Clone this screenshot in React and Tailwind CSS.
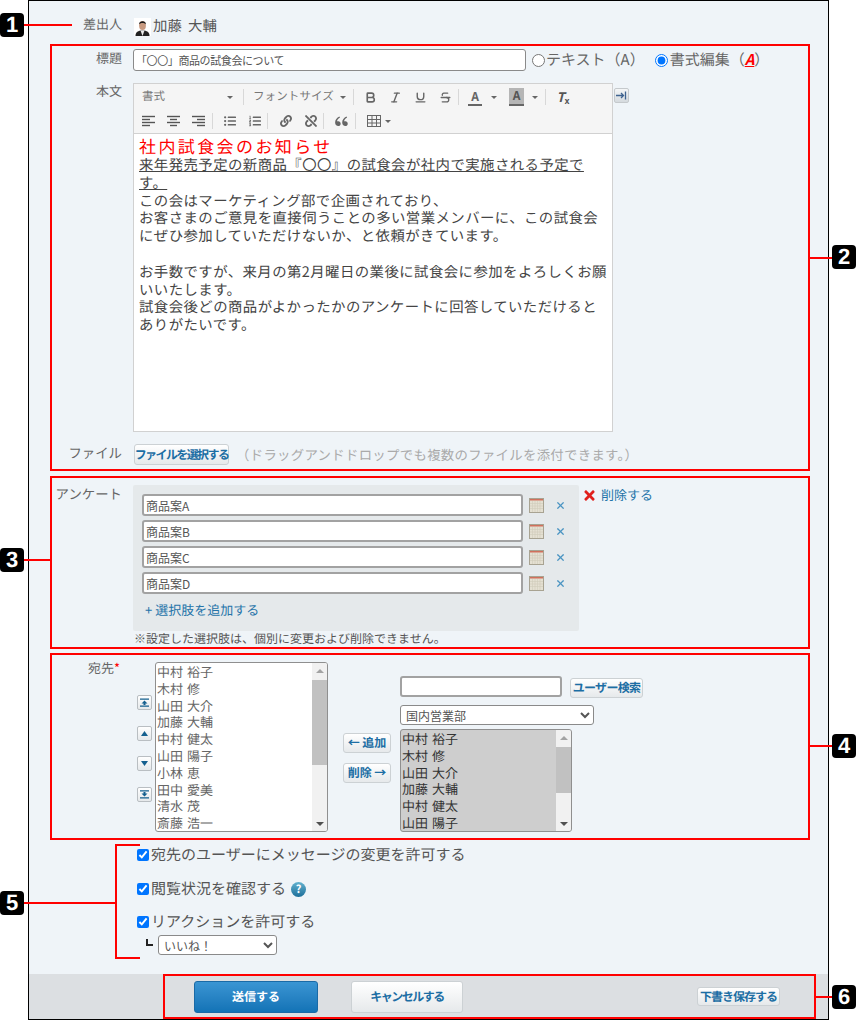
import { Bold, Italic, Underline, Strikethrough, X } from 'lucide-react'
import { FaLink, FaUnlink, FaTimes, FaListUl, FaListOl } from 'react-icons/fa'
import { RiDoubleQuotesL } from 'react-icons/ri'

const SENDERS = ['中村 裕子', '木村 修', '山田 大介', '加藤 大輔', '中村 健太', '山田 陽子', '小林 恵', '田中 愛美', '清水 茂', '斎藤 浩一']
const CHOICES = ['商品案A', '商品案B', '商品案C', '商品案D']
const btn = 'border border-[#ccd1d4] rounded-[3px] bg-gradient-to-b from-white to-[#e6e9eb] text-[#1c6ea4] font-bold text-[12px] flex items-center justify-center whitespace-nowrap'

function Sep() {
  return <span className="w-px h-[16px] bg-[#d8d8d8] shrink-0" />
}

function Caret({ className = '' }) {
  return <span className={`w-0 h-0 border-x-[3px] border-x-transparent border-t-[3px] border-t-[#666] shrink-0 ${className}`} />
}

function Tool({ children, className = 'w-[25px]' }) {
  return <span className={`h-[20px] flex items-center justify-center text-[#666] shrink-0 ${className}`}>{children}</span>
}

function AlignIcon({ kind }) {
  const lines = kind === 'left'
    ? [[1, 14], [1, 9], [1, 14], [1, 9]]
    : kind === 'center'
      ? [[1, 14], [4, 11], [1, 14], [4, 11]]
      : [[1, 14], [6, 14], [1, 14], [6, 14]]
  return (
    <svg width="15" height="12" viewBox="0 0 15 12">
      {lines.map(([a, b], i) => (
        <line key={i} x1={a} x2={b} y1={1.5 + i * 3} y2={1.5 + i * 3} stroke="#555" strokeWidth="1.4" />
      ))}
    </svg>
  )
}

function Toolbar() {
  return (
    <div className="h-[50px] pt-[3px] bg-[#f5f5f5] border-b border-[#d1d1d1] text-[#777]">
      <div className="h-[20px] flex items-center">
        <div className="w-[109px] flex items-center pl-[8px] text-[11.5px] shrink-0">
          <span>書式</span>
          <Caret className="ml-[62px]" />
        </div>
        <Sep />
        <div className="w-[109px] flex items-center pl-[9px] text-[11.5px] tracking-[0.1px] shrink-0">
          <span>フォントサイズ</span>
          <Caret className="ml-[6px]" />
        </div>
        <Sep />
        <span className="w-[4px]" />
        <Tool><Bold size={13} strokeWidth={3} /></Tool>
        <Tool><Italic size={13} strokeWidth={2.6} /></Tool>
        <Tool><Underline size={13} strokeWidth={2.6} /></Tool>
        <Tool><Strikethrough size={13} strokeWidth={2.4} /></Tool>
        <Sep />
        <Tool className="w-[32px]"><span className="border-b-2 border-[#666] text-[12px] font-bold leading-[15px] px-[3px]">A</span></Tool>
        <Caret />
        <span className="w-[9px]" />
        <span className="w-[15px] h-[18px] bg-[#b5b5b5] border-b-2 border-[#666] text-[#555] text-[12px] font-bold leading-[15px] text-center ml-[3px]">A</span>
        <Caret className="ml-[8px]" />
        <span className="w-[7px]" />
        <Sep />
        <Tool className="w-[34px]">
          <span className="italic font-bold text-[13px] leading-[16px] text-[#555]">T<sub className="text-[9px] not-italic">x</sub></span>
        </Tool>
      </div>
      <div className="h-[20px] mt-[4px] flex items-center pl-[2px]">
        <Tool><AlignIcon kind="left" /></Tool>
        <Tool><AlignIcon kind="center" /></Tool>
        <Tool><AlignIcon kind="right" /></Tool>
        <span className="w-px" />
        <Sep />
        <span className="w-[4px]" />
        <Tool><FaListUl size={12} /></Tool>
        <Tool><FaListOl size={12} /></Tool>
        <Sep />
        <span className="w-[5px]" />
        <Tool><FaLink size={12} /></Tool>
        <Tool><FaUnlink size={12} /></Tool>
        <Sep />
        <span className="w-[5px]" />
        <Tool><RiDoubleQuotesL size={17} /></Tool>
        <span className="w-[1px]" />
        <Sep />
        <span className="w-[5px]" />
        <Tool>
          <svg width="14" height="12" viewBox="0 0 14 12" fill="none" stroke="#666" strokeWidth="1">
            <rect x="0.5" y="0.5" width="13" height="11" />
            <path d="M0 4.5h14M0 8h14M5 0v12M9.5 0v12" />
          </svg>
        </Tool>
        <Caret className="ml-[-1px]" />
      </div>
    </div>
  )
}

function Field({ label, className = '', labelClass = 'text-[13px]', children }) {
  return (
    <div className={`flex ${className}`}>
      <div className={`w-[70px] shrink-0 text-right text-[#666] whitespace-nowrap ${labelClass}`}>{label}</div>
      <div className="ml-[11px] flex-1 min-w-0">{children}</div>
    </div>
  )
}

function CalendarIcon() {
  return (
    <svg width="15" height="15" viewBox="0 0 15 15" className="shrink-0">
      <rect x="0.5" y="0.5" width="14" height="14" fill="#e4e0d2" stroke="#a8a392" />
      <rect x="1" y="1" width="13" height="1.5" fill="#d0705c" />
      <path d="M1 5.5h13M1 8h13M1 10.5h13M3.5 3v11M6 3v11M8.5 3v11M11 3v11" stroke="#d0cbba" strokeWidth="0.6" />
    </svg>
  )
}

function ChoiceRow({ value }) {
  return (
    <div className="flex items-center h-[22px] mb-[4px]">
      <input
        readOnly
        value={value}
        className="w-[381px] h-[22px] bg-white border-2 border-[#a2a2a2] rounded-[3px] pl-[2px] text-[12px] text-[#555] outline-none"
      />
      <span className="w-[6px]" />
      <CalendarIcon />
      <X size={11} className="ml-[11px] text-[#4a94c2]" strokeWidth={2.6} />
    </div>
  )
}

function ListBox({ items, width, height, thumbTop, thumbHeight, selected }) {
  return (
    <div className={`flex border border-[#8f8f8f] rounded-[3px] overflow-hidden shrink-0 ${width} ${height} ${selected ? 'bg-[#cecece] text-[#333]' : 'bg-white text-[#666]'}`}>
      <div className="flex-1 pl-[1px] pt-[1px] text-[13px] leading-[16.8px] overflow-hidden whitespace-nowrap [word-spacing:1px]">
        {items.map((name) => <div key={name}>{name}</div>)}
      </div>
      <div className="w-[15px] bg-[#f1f1f1] flex flex-col items-center shrink-0">
        <span className="h-[15px] flex items-center justify-center shrink-0">
          <span className="w-0 h-0 border-x-[4px] border-x-transparent border-b-[4px] border-b-[#a3a3a3]" />
        </span>
        <span className={`shrink-0 ${thumbTop}`} />
        <span className={`w-full bg-[#c1c1c1] shrink-0 ${thumbHeight}`} />
        <span className="flex-1" />
        <span className="h-[15px] flex items-center justify-center shrink-0">
          <span className="w-0 h-0 border-x-[4px] border-x-transparent border-t-[4px] border-t-[#505050]" />
        </span>
      </div>
    </div>
  )
}

function MoveButton({ d, className = '' }) {
  return (
    <span className={`w-[15px] h-[15px] border border-[#b9bec2] rounded-[2px] bg-gradient-to-b from-white to-[#e6e9eb] flex items-center justify-center ${className}`}>
      <svg width="9" height="9" viewBox="0 0 9 9"><path d={d} fill="#15608f" /></svg>
    </span>
  )
}

function CheckRow({ label, children }) {
  return (
    <label className="h-[22px] flex items-center text-[15px] text-[#555] whitespace-nowrap">
      <input type="checkbox" defaultChecked className="w-[12px] h-[12px] m-0 mr-[2px] shrink-0" />
      <span>{label}</span>
      {children}
    </label>
  )
}

function Badge({ n, className }) {
  return (
    <div className={`absolute w-[24px] h-[24px] bg-black rounded-[4px] text-white font-bold text-[22px] leading-[24px] text-center font-['Liberation_Sans',sans-serif] ${className}`}>
      {n}
    </div>
  )
}

function Avatar() {
  return (
    <svg width="17" height="18" viewBox="0 0 17 18" className="shrink-0">
      <rect width="17" height="18" fill="#fff" />
      <path d="M1.5 18c0-4 2.5-5.5 7-5.5s7 1.500 7 5.500z" fill="#222" />
      <path d="M6.500 12.500h4l-2 5.500z" fill="#eee" />
      <ellipse cx="8.500" cy="7.500" rx="3.400" ry="4.500" fill="#c89a80" />
      <path d="M5 6.500C4.800 2.500 12 2 12 6.500c-1-2-6-2-7 0z" fill="#1c1c1c" />
    </svg>
  )
}

export default function App() {
  return (
    <div className="relative w-[856px] h-[1020px] overflow-hidden bg-white font-['Noto_Sans_CJK_JP',sans-serif] [text-rendering:geometricPrecision]">
      <div className="ml-[28px] w-[801px] h-[1020px] border border-black bg-[#eff4f8] flex flex-col">
        {/* 差出人 */}
        <div className="h-[43px] shrink-0 flex items-start pt-[17px] pl-[53px]">
          <span className="text-[13px] text-[#666] leading-[14px] -mt-[1px] w-[40px] text-right">差出人</span>
          <span className="ml-[12px]"><Avatar /></span>
          <span className="ml-[2px] text-[14.4px] leading-[14px] mt-[1px] text-[#555] [word-spacing:3px]">加藤 大輔</span>
        </div>

        {/* 標題 / 本文 / ファイル */}
        <section className="ml-[21px] w-[760px] h-[427px] border-2 border-[#ff0000] shrink-0">
          <Field label="標題" labelClass="text-[13px] pb-[4px]" className="mt-[3px] h-[22px] items-center">
            <div className="flex items-center">
              <input
                readOnly
                value="「〇〇」商品の試食会について"
                className="w-[393px] h-[22px] bg-white border border-[#8a8a8a] rounded-[3px] pl-[2px] text-[11px] tracking-[-0.4px] text-[#555] outline-none"
              />
              <label className="ml-[6px] flex items-center text-[15px] text-[#666] whitespace-nowrap">
                <input type="radio" name="mode" className="w-[13px] h-[13px] m-0 mr-[1px]" />
                <span>テキスト（A）</span>
              </label>
              <label className="ml-[10px] flex items-center text-[15px] text-[#666] whitespace-nowrap">
                <input type="radio" name="mode" defaultChecked className="w-[13px] h-[13px] m-0 mr-[2px]" />
                <span>書式編集（</span>
                <span className="text-[#ff0000] font-bold italic underline">A</span>
                <span>）</span>
              </label>
            </div>
          </Field>

          <Field label="本文" labelClass="text-[13px] -mt-[2px]" className="mt-[12px]">
            <div className="flex items-start">
              <div className="w-[480px] h-[349px] border border-[#d1d1d1] bg-white shrink-0">
                <Toolbar />
                <div className="pl-[5px] pt-[2px] text-[14.4px] tracking-[0.44px] leading-[17.8px] text-[#444] whitespace-nowrap">
                  <div className="text-[#ff0000] text-[17px] leading-[20px] tracking-[2.4px]">社内試食会のお知らせ</div>
                  <div className="underline">来年発売予定の新商品『〇〇』の試食会が社内で実施される予定で</div>
                  <div className="underline">す。</div>
                  <div>この会はマーケティング部で企画されており、</div>
                  <div>お客さまのご意見を直接伺うことの多い営業メンバーに、この試食会</div>
                  <div>にぜひ参加していただけないか、と依頼がきています。</div>
                  <div className="h-[17.8px]" />
                  <div>お手数ですが、来月の第2月曜日の業後に試食会に参加をよろしくお願</div>
                  <div>いいたします。</div>
                  <div>試食会後どの商品がよかったかのアンケートに回答していただけると</div>
                  <div>ありがたいです。</div>
                </div>
              </div>
              <span className="mt-[5px] w-[15px] h-[15px] ml-[1px] border border-[#c5c9cc] rounded-[2px] bg-gradient-to-b from-[#f4f6f7] to-[#d5dade] flex items-center justify-center">
                <svg width="11" height="9" viewBox="0 0 11 9" fill="none" stroke="#3f6390" strokeWidth="1.300">
                  <path d="M0 4.500h7M5 2l2.500 2.500L5 7M9.500 0.500v8" />
                </svg>
              </span>
            </div>
          </Field>

          <Field label="ファイル" labelClass="text-[13.4px] leading-[17px]" className="mt-[12px] items-start">
            <div className="flex items-center h-[21px]">
              <span className={`${btn} w-[95px] h-[21px] ml-[1px] text-[11px] tracking-[-1.600px]`}>ファイルを選択する</span>
              <span className="ml-[7px] text-[13.400px] tracking-[0.3px] text-[#aaa] whitespace-nowrap">（ドラッグアンドドロップでも複数のファイルを添付できます。）</span>
            </div>
          </Field>
        </section>

        {/* アンケート */}
        <section className="ml-[21px] mt-[5px] w-[760px] h-[173px] border-2 border-[#ff0000] shrink-0">
          <Field label="アンケート" labelClass="text-[13.4px] leading-[17px]" className="mt-[7px]">
            <div className="flex items-start">
              <div className="w-[446px] h-[146px] bg-[#e5e9eb] rounded-[2px] pt-[9px] pl-[9px] shrink-0">
                {CHOICES.map((c) => <ChoiceRow key={c} value={c} />)}
                <div className="mt-[7px] ml-[3px] text-[13px] leading-[18px] text-[#2574a9]">+ 選択肢を追加する</div>
              </div>
              <div className="ml-[3px] mt-[1px] flex items-center text-[13px] leading-[18px] text-[#2574a9] whitespace-nowrap">
                <FaTimes size={15} className="text-[#e0201c] mr-[4px]" />
                <span>削除する</span>
              </div>
            </div>
            <div className="mt-[1px] ml-[1px] text-[12px] leading-[14px] text-[#555] whitespace-nowrap">※設定した選択肢は、個別に変更および削除できません。</div>
          </Field>
        </section>

        {/* 宛先 */}
        <section className="ml-[21px] mt-[4px] w-[760px] h-[187px] border-2 border-[#ff0000] flex items-start shrink-0">
          <div className="w-[68px] mt-[4px] text-right text-[13px] leading-[18px] text-[#666] shrink-0">宛先<span className="text-[#ff0000]">*</span></div>
          <div className="ml-[17px] mt-[40px] w-[15px] flex flex-col gap-[15.500px] shrink-0">
            <MoveButton d="M0 0.500h9V1.800H0zM4.500 2.500L7.500 5.500H5.500V7H3.500V5.500H1.500zM0 7.500h9V8.800H0z" />
            <MoveButton d="M4.500 2L8 7H1z" />
            <MoveButton d="M4.500 7L1 2H8z" />
            <MoveButton d="M0 0.200h9V1.500H0zM4.500 6.500L1.500 3.500H3.500V2H5.500V3.500H7.500zM0 7.200h9V8.500H0z" />
          </div>
          <div className="ml-[3px] mt-[7px]">
            <ListBox items={SENDERS} width="w-[173px]" height="h-[170px]" thumbTop="h-[2px]" thumbHeight="h-[85px]" />
          </div>
          <div className="ml-[15px] mt-[78px] flex flex-col gap-[10px] shrink-0">
            <span className={`${btn} w-[48px] h-[20px]`}>← 追加</span>
            <span className={`${btn} w-[48px] h-[20px]`}>削除 →</span>
          </div>
          <div className="ml-[9px] mt-[21px] flex flex-col">
            <div className="flex items-start">
              <input readOnly className="w-[162px] h-[21px] bg-white border-2 border-[#a2a2a2] rounded-[3px] outline-none" />
              <span className={`${btn} ml-[8px] mt-[2px] w-[73px] h-[20px] text-[11.500px] tracking-[-0.700px]`}>ユーザー検索</span>
            </div>
            <select defaultValue="国内営業部" className="mt-[7px] w-[194px] h-[20px] bg-white border border-[#8a8a8a] rounded-[3px] pl-[1px] text-[12px] text-[#555]">
              <option>国内営業部</option>
            </select>
            <div className="mt-[4px]">
              <ListBox items={SENDERS.slice(0, 6)} width="w-[172px]" height="h-[103px]" thumbTop="h-[2px]" thumbHeight="h-[46px]" selected />
            </div>
          </div>
        </section>

        {/* オプション */}
        <div className="pl-[108px] pt-[4px] flex-1 flex flex-col gap-[12px]">
          <CheckRow label="宛先のユーザーにメッセージの変更を許可する" />
          <CheckRow label="閲覧状況を確認する">
            <span className="ml-[5px] w-[15px] h-[15px] rounded-full bg-gradient-to-b from-[#62b2cf] to-[#1b6f9a] text-white font-bold text-[11px] leading-[15px] text-center">?</span>
          </CheckRow>
          <div className="-mt-[1px]">
            <CheckRow label="リアクションを許可する" />
            <div className="mt-[2px] ml-[9px] flex items-start">
              <span className="w-[7px] h-[7px] mt-[4px] border-l-2 border-b-2 border-[#222] shrink-0" />
              <select defaultValue="いいね！" className="ml-[5px] w-[119px] h-[20px] bg-white border border-[#8a8a8a] rounded-[3px] pl-[1px] text-[12px] text-[#555]">
                <option>いいね！</option>
              </select>
            </div>
          </div>
        </div>

        {/* フッター */}
        <div className="h-[45px] bg-[#dcdfe2] shrink-0">
          <div className="ml-[134px] w-[653px] h-[45px] border-2 border-[#ff0000] flex items-center pl-[29px] pr-[34px]">
            <span className="w-[124px] h-[32px] rounded-[3px] border border-[#1a6aa6] bg-gradient-to-b from-[#3a95d3] to-[#1273b6] text-white font-bold text-[12px] flex items-center justify-center">送信する</span>
            <span className={`${btn} ml-[33px] w-[112px] h-[32px] tracking-[-1.500px]`}>キャンセルする</span>
            <span className={`${btn} ml-auto w-[83px] h-[19px] text-[11px] tracking-[-1px]`}>下書き保存する</span>
          </div>
        </div>
      </div>

      {/* 注釈 */}
      <Badge n="1" className="left-0 top-[13px]" />
      <Badge n="2" className="left-[832px] top-[245px]" />
      <Badge n="3" className="left-0 top-[548px]" />
      <Badge n="4" className="left-[832px] top-[734px]" />
      <Badge n="5" className="left-0 top-[891px]" />
      <Badge n="6" className="left-[832px] top-[985px]" />
      <div className="absolute left-[24px] top-[24px] w-[48px] h-[2px] bg-[#ff0000]" />
      <div className="absolute left-[810px] top-[257px] w-[22px] h-[2px] bg-[#ff0000]" />
      <div className="absolute left-[24px] top-[559px] w-[26px] h-[2px] bg-[#ff0000]" />
      <div className="absolute left-[810px] top-[745px] w-[22px] h-[2px] bg-[#ff0000]" />
      <div className="absolute left-[24px] top-[902px] w-[91px] h-[2px] bg-[#ff0000]" />
      <div className="absolute left-[115px] top-[844px] w-[25px] h-[115px] border-2 border-r-0 border-[#ff0000]" />
      <div className="absolute left-[816px] top-[996px] w-[16px] h-[2px] bg-[#ff0000]" />
    </div>
  )
}
